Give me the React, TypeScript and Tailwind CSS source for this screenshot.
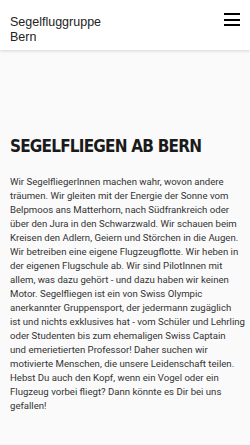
const lines = [
  "Wir SegelfliegerInnen machen wahr, wovon andere",
  "träumen. Wir gleiten mit der Energie der Sonne vom",
  "Belpmoos ans Matterhorn, nach Südfrankreich oder",
  "über den Jura in den Schwarzwald. Wir schauen beim",
  "Kreisen den Adlern, Geiern und Störchen in die Augen.",
  "Wir betreiben eine eigene Flugzeugflotte. Wir heben in",
  "der eigenen Flugschule ab. Wir sind PilotInnen mit",
  "allem, was dazu gehört - und dazu haben wir keinen",
  "Motor. Segelfliegen ist ein von Swiss Olympic",
  "anerkannter Gruppensport, der jedermann zugäglich",
  "ist und nichts exklusives hat - vom Schüler und Lehrling",
  "oder Studenten bis zum ehemaligen Swiss Captain",
  "und emerietierten Professor! Daher suchen wir",
  "motivierte Menschen, die unsere Leidenschaft teilen.",
  "Hebst Du auch den Kopf, wenn ein Vogel oder ein",
  "Flugzeug vorbei fliegt? Dann könnte es Dir bei uns",
  "gefallen!",
];

export default function App() {
  return (
    <div className="min-h-[445px] bg-[#fafafa]">
      {/* Header */}
      <header className="h-[50px] bg-white shadow-[0_1px_3px_rgba(0,0,0,0.15)] flex items-start justify-between pl-[10px] pr-[10px]">
        <div className="pt-[15px] font-['Liberation_Sans',Arial,sans-serif] text-[12.5px] leading-[15px] text-[#222]">
          Segelfluggruppe
          <br />
          Bern
        </div>
        <button className="mt-[13px] w-[16px] flex flex-col gap-[3.5px]" aria-label="Menu">
          <span className="block h-[2px] w-full bg-black" />
          <span className="block h-[2px] w-full bg-black" />
          <span className="block h-[2px] w-full bg-black" />
        </button>
      </header>

      <main className="pl-[10px] pr-[4px] pt-[86px] pb-10">
        <h1 className="font-['DejaVu_Sans_Condensed','DejaVu_Sans',sans-serif] [font-stretch:condensed] font-bold text-[17px] leading-[20px] text-[#1a1a1a] tracking-[-0.8px]">
          SEGELFLIEGEN AB BERN
        </h1>
        <p className="mt-[19px] font-['Roboto',sans-serif] text-[9.6px] leading-[14px] text-[#333]">
          {lines.map((l) => (
            <span key={l} className="block whitespace-nowrap">
              {l}
            </span>
          ))}
        </p>
      </main>
    </div>
  );
}
